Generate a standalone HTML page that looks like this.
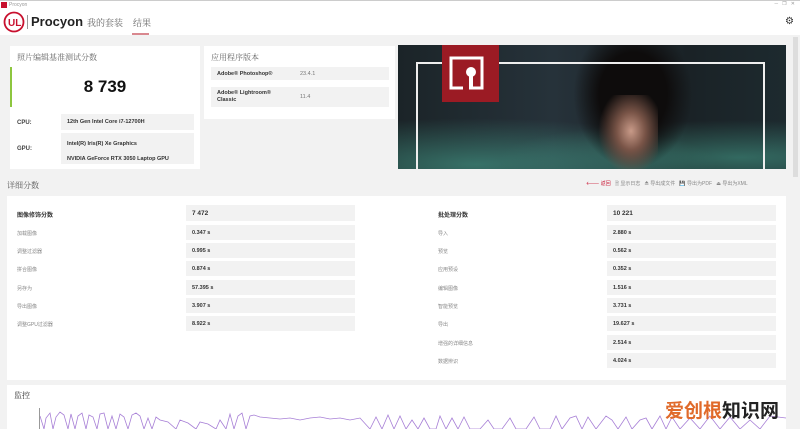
<!DOCTYPE html>
<html><head><meta charset="utf-8"><style>
*{margin:0;padding:0;box-sizing:border-box}
body{width:800px;height:429px;overflow:hidden;background:#f2f2f2;font-family:"Liberation Sans","Noto Sans CJK SC",sans-serif;position:relative;color:#333}
.abs{position:absolute}
.title{left:0;top:0;width:800px;height:9px;background:#fff;border-top:1px solid #ccc;font-size:5px;color:#999}
.nav{left:0;top:9px;width:800px;height:26px;background:#fff}
.card{background:#fff}
.lbl{font-size:6px;color:#444;font-weight:bold}
.box{background:#f2f2f2;font-size:5.5px;font-weight:bold;color:#333;padding-left:6px;display:flex;align-items:center}
.rl{font-size:5px;color:#888}
.cn{font-family:"Noto Serif CJK SC","Liberation Serif",serif}
</style></head><body>
<div class="abs title"><span style="position:absolute;left:1px;top:1px;width:6px;height:6px;background:#c8102e"></span><span style="position:absolute;left:9px;top:1px">Procyon</span><span style="position:absolute;right:5px;top:0;color:#999">─ &nbsp; ❐ &nbsp; ✕</span></div>
<div class="abs nav">
 <svg class="abs" style="left:3px;top:2px" width="22" height="22" viewBox="0 0 22 22"><circle cx="11" cy="11" r="9.5" fill="none" stroke="#c8102e" stroke-width="1.8"/><text x="5" y="15" font-size="10" font-weight="bold" fill="#c8102e" font-family="Liberation Sans">UL</text></svg>
 <div class="abs" style="left:27px;top:6px;width:1px;height:14px;background:#999"></div>
 <div class="abs" style="left:31px;top:5px;font-size:13px;font-weight:bold;color:#222">Procyon</div>
 <div class="abs cn" style="left:87px;top:7px;font-size:9px;color:#666">我的套装</div>
 <div class="abs cn" style="left:133px;top:7px;font-size:9px;color:#666">结果</div>
 <div class="abs" style="left:132px;top:24px;width:17px;height:2px;background:#d9888f"></div>
 <div class="abs" style="left:785px;top:7px;font-size:10px;color:#333">⚙</div>
</div>
<div class="abs" style="left:793px;top:37px;width:5px;height:140px;background:#ddd"></div>

<div class="abs card" style="left:10px;top:46px;width:190px;height:123px">
 <div class="abs cn" style="left:7px;top:6px;font-size:8px;color:#666">照片编辑基准测试分数</div>
 <div class="abs" style="left:0;top:21px;width:2px;height:40px;background:#8dc63f"></div>
 <div class="abs" style="left:0;top:31px;width:190px;text-align:center;font-size:17px;font-weight:bold;color:#111">8 739</div>
 <div class="abs lbl" style="left:7px;top:74px">CPU:</div>
 <div class="abs box" style="left:51px;top:68px;width:133px;height:16px">12th Gen Intel Core i7-12700H</div>
 <div class="abs lbl" style="left:7px;top:100px">GPU:</div>
 <div class="abs box" style="left:51px;top:87px;width:133px;height:31px;display:block;padding-top:4px;line-height:15px">Intel(R) Iris(R) Xe Graphics<br>NVIDIA GeForce RTX 3050 Laptop GPU</div>
</div>

<div class="abs card" style="left:204px;top:46px;width:191px;height:73px">
 <div class="abs cn" style="left:7px;top:6px;font-size:8px;color:#666">应用程序版本</div>
 <div class="abs box" style="left:7px;top:21px;width:178px;height:13px">Adobe® Photoshop®<span style="position:absolute;left:89px;font-weight:normal;color:#777">23.4.1</span></div>
 <div class="abs box" style="left:7px;top:41px;width:178px;height:20px;line-height:7px">Adobe® Lightroom®<br>Classic<span style="position:absolute;left:89px;top:7px;font-weight:normal;color:#777">11.4</span></div>
</div>

<div class="abs" style="left:398px;top:45px;width:388px;height:124px;background:linear-gradient(90deg,#1b2428,#26323a 40%,#1a2226 75%,#1d2a2f);overflow:hidden">
 <div class="abs" style="left:0;top:60px;width:388px;height:70px;background:radial-gradient(ellipse at 20% 85%,rgba(70,160,140,.6),transparent 55%),radial-gradient(ellipse at 88% 75%,rgba(70,160,140,.55),transparent 50%)"></div>
 <div class="abs" style="left:175px;top:0;width:120px;height:124px;background:radial-gradient(ellipse at 50% 40%,#0e0c0c 0,#0e0c0c 40%,transparent 70%)"></div>
 <div class="abs" style="left:200px;top:50px;width:60px;height:80px;background:radial-gradient(ellipse at 55% 45%,#c89a88 0,#7a5548 30%,transparent 70%)"></div>
 <div class="abs" style="left:18px;top:17px;width:349px;height:120px;border:2px solid #eee;border-bottom:none"></div>
 <div class="abs" style="left:44px;top:0;width:57px;height:57px;background:#9b1b24">
  <svg width="57" height="57"><rect x="9" y="13" width="31" height="30" fill="none" stroke="#fff" stroke-width="3"/><circle cx="29" cy="27" r="5" fill="#fff"/><rect x="27" y="27" width="4" height="17" fill="#fff"/><rect x="21" y="40" width="6" height="5" fill="#9b1b24"/></svg>
 </div>
</div>

<div class="abs cn" style="left:7px;top:180px;font-size:8px;color:#555">详细分数</div>
<div class="abs" style="left:586px;top:180px;font-size:5px;color:#888;white-space:nowrap"><span style="color:#c8102e">🡐 返回</span> &nbsp; 🗎 显示日志 &nbsp; ⏏ 导出成文件 &nbsp; 💾 导出为PDF &nbsp; ⏏ 导出为XML</div>

<div class="abs card" style="left:7px;top:196px;width:779px;height:184px"></div>
<div class="abs" style="left:17px;top:210px;font-size:6px;font-weight:bold;color:#333">图像修饰分数</div>
<div class="abs box" style="left:186px;top:205px;width:169px;height:16px;font-size:6.5px">7 472</div>
<div class="abs" style="left:438px;top:210px;font-size:6px;font-weight:bold;color:#333">批处理分数</div>
<div class="abs box" style="left:607px;top:205px;width:169px;height:16px;font-size:6.5px">10 221</div>

<div class="abs rl" style="left:17px;top:230px">加载图像</div><div class="abs box" style="left:186px;top:225px;width:169px;height:15px">0.347 s</div>
<div class="abs rl" style="left:17px;top:248px">调整过滤器</div><div class="abs box" style="left:186px;top:243px;width:169px;height:15px">0.995 s</div>
<div class="abs rl" style="left:17px;top:266px">拼合图像</div><div class="abs box" style="left:186px;top:261px;width:169px;height:15px">0.874 s</div>
<div class="abs rl" style="left:17px;top:285px">另存为</div><div class="abs box" style="left:186px;top:280px;width:169px;height:15px">57.395 s</div>
<div class="abs rl" style="left:17px;top:303px">导出图像</div><div class="abs box" style="left:186px;top:298px;width:169px;height:15px">3.907 s</div>
<div class="abs rl" style="left:17px;top:321px">调整GPU过滤器</div><div class="abs box" style="left:186px;top:316px;width:169px;height:15px">8.922 s</div>

<div class="abs rl" style="left:438px;top:230px">导入</div><div class="abs box" style="left:607px;top:225px;width:169px;height:15px">2.880 s</div>
<div class="abs rl" style="left:438px;top:248px">预览</div><div class="abs box" style="left:607px;top:243px;width:169px;height:15px">0.562 s</div>
<div class="abs rl" style="left:438px;top:266px">应用预设</div><div class="abs box" style="left:607px;top:261px;width:169px;height:15px">0.352 s</div>
<div class="abs rl" style="left:438px;top:285px">编辑图像</div><div class="abs box" style="left:607px;top:280px;width:169px;height:15px">1.516 s</div>
<div class="abs rl" style="left:438px;top:303px">智能预览</div><div class="abs box" style="left:607px;top:298px;width:169px;height:15px">3.731 s</div>
<div class="abs rl" style="left:438px;top:321px">导出</div><div class="abs box" style="left:607px;top:316px;width:169px;height:15px">19.627 s</div>
<div class="abs rl" style="left:438px;top:340px">增强的详细信息</div><div class="abs box" style="left:607px;top:335px;width:169px;height:15px">2.514 s</div>
<div class="abs rl" style="left:438px;top:358px">数据辨识</div><div class="abs box" style="left:607px;top:353px;width:169px;height:15px">4.024 s</div>

<div class="abs card" style="left:7px;top:385px;width:779px;height:44px"></div>
<div class="abs cn" style="left:14px;top:390px;font-size:8px;color:#333">监控</div>
<div class="abs" style="left:39px;top:408px;width:1px;height:21px;background:#999"></div>
<svg class="abs" style="left:40px;top:408px" width="746" height="21"><polyline fill="none" stroke="#a77fd6" stroke-width="0.8" points="0,8 4,21 6,10 10,5 13,21 16,9 20,4 24,7 28,21 31,6 35,21 38,8 42,5 46,21 49,7 53,9 57,21 60,6 64,5 68,21 72,8 76,21 80,6 84,9 88,21 92,7 96,5 100,8 104,21 108,10 112,21 116,9 120,12 128,14 136,21 140,12 148,15 156,21 160,14 168,16 176,21 180,12 186,21 190,6 194,21 198,8 202,5 206,21 210,8 214,7 220,9 230,10 240,11 250,10 260,12 270,10 280,9 290,11 300,10 310,12 320,10 330,21 336,9 342,21 348,7 354,21 360,8 366,21 372,12 378,21 384,10 390,21 396,21 400,8 406,21 412,10 418,21 424,9 430,21 440,21 448,12 454,21 462,21 470,10 476,21 486,21 494,9 500,21 510,21 516,8 522,21 530,10 536,8 542,21 548,9 556,21 566,8 572,12 578,21 586,9 592,21 600,12 606,10 612,21 620,8 626,21 632,9 640,21 650,10 660,21 670,8 680,21 690,9 700,21 710,12 720,21 730,8 746,10"/></svg>
<div class="abs" style="left:665px;top:396px;font-size:19px;font-weight:bold;white-space:nowrap"><span style="color:#e06a2a">爱创根</span><span style="color:#222">知识网</span></div>
</body></html>
